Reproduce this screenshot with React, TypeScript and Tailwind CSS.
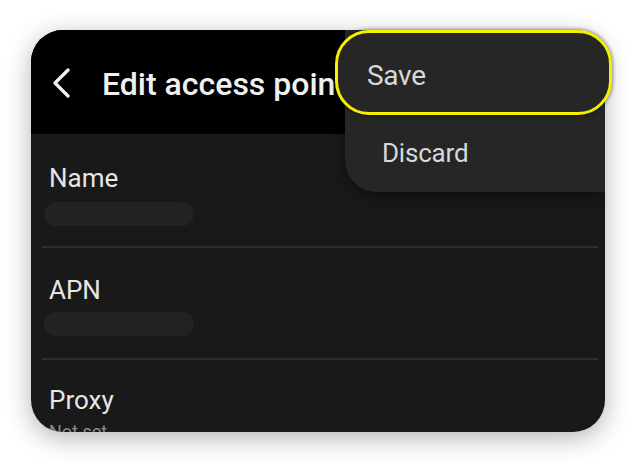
import React from "react";

export default function App() {
  return (
    <div
      className="w-[642px] h-[466px] bg-white pt-[30px] pl-[31px]"
      style={{ fontFamily: "Roboto, 'Noto Sans', sans-serif" }}
    >
      <div className="relative w-[574px] h-[402px]">
        <div className="relative w-full h-full rounded-[32px] overflow-hidden bg-[#191919] shadow-[0_6px_26px_rgba(0,0,0,0.3)] flex flex-col">
          {/* header */}
          <div className="h-[104px] shrink-0 bg-black flex items-start">
            <svg
              className="ml-[21px] mt-[38px]"
              width="20"
              height="30"
              viewBox="0 0 20 30"
              fill="none"
            >
              <polyline
                points="16,2 3,15 16,28"
                stroke="#f2f2f2"
                strokeWidth="3.2"
                strokeLinecap="round"
                strokeLinejoin="round"
              />
            </svg>
            <div className="ml-[30px] mt-[36px] text-[32px] leading-[36px] font-medium text-[#f0f0f0] whitespace-nowrap">
              Edit access point
            </div>
          </div>
          {/* body */}
          <div className="flex flex-col">
            <div className="flex flex-col pt-[28px] pb-[20px]">
              <div className="pl-[18px] text-[26px] leading-[32px] text-[#e6e6e6]">Name</div>
              <div className="ml-[13px] mt-[8px] w-[150px] h-[24px] rounded-full bg-[#222222]" />
            </div>
            <div className="ml-[11px] mr-[7px] h-[2px] bg-[#2e2e2e]" />
            <div className="flex flex-col pt-[26px] pb-[22px]">
              <div className="pl-[18px] text-[26px] leading-[32px] text-[#e6e6e6]">APN</div>
              <div className="ml-[13px] mt-[6px] w-[150px] h-[24px] rounded-full bg-[#222222]" />
            </div>
            <div className="ml-[11px] mr-[7px] h-[2px] bg-[#2e2e2e]" />
            <div className="flex flex-col pt-[24px]">
              <div className="pl-[18px] text-[26px] leading-[32px] text-[#e6e6e6]">Proxy</div>
              <div className="pl-[18px] mt-[5px] text-[18px] leading-[22px] text-[#8a8a8a]">Not set</div>
            </div>
          </div>
          {/* menu body */}
          <div className="absolute left-[314px] top-0 w-[262px] h-[162px] rounded-bl-[32px] bg-[#262626] shadow-[0_4px_14px_rgba(0,0,0,0.45)] pl-[37px] pt-[107px]">
            <div className="text-[26px] leading-[32px] text-[#d8d8d8] tracking-[-0.2px]">Discard</div>
          </div>
        </div>
        {/* highlighted Save */}
        <div className="absolute left-[304px] top-0 w-[277px] h-[85px] rounded-[34px] border-[3px] border-[#f5f000] bg-[#262626] shadow-[0_0_4px_rgba(0,0,0,0.6)] pl-[29px] pt-[26px]">
          <div className="text-[28px] leading-[34px] text-[#d8d8d8] tracking-[-0.3px]">Save</div>
        </div>
      </div>
    </div>
  );
}
